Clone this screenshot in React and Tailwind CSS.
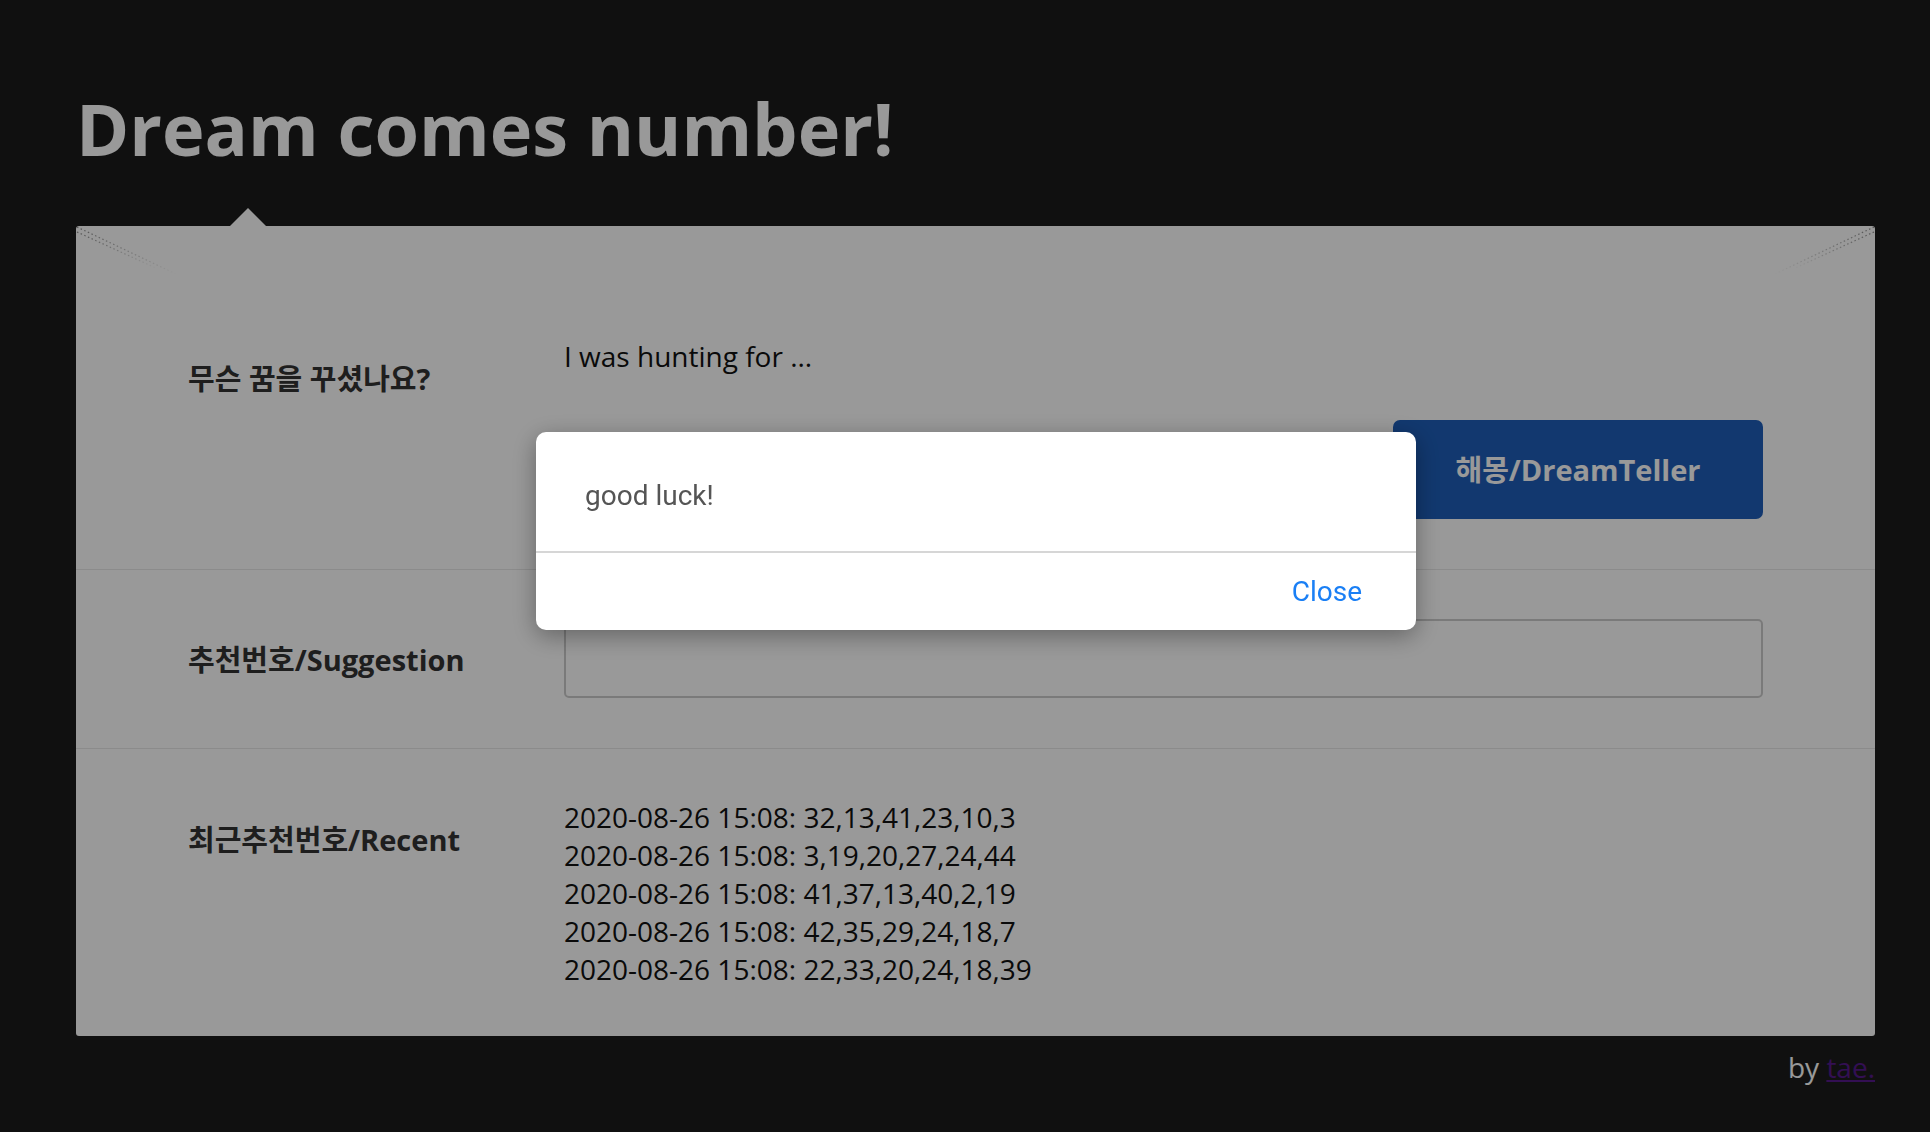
import React from 'react';

const RECENT = [
  '2020-08-26 15:08: 32,13,41,23,10,3',
  '2020-08-26 15:08: 3,19,20,27,24,44',
  '2020-08-26 15:08: 41,37,13,40,2,19',
  '2020-08-26 15:08: 42,35,29,24,18,7',
  '2020-08-26 15:08: 22,33,20,24,18,39',
];

// paper-fold dotted lines in the card corners
function CornerFold({ flip }) {
  return (
    <svg
      width="110"
      height="55"
      viewBox="0 0 110 55"
      className={`absolute top-0 ${flip ? 'right-0 -scale-x-100' : 'left-0'}`}
    >
      <defs>
        <linearGradient id={flip ? 'fadeR' : 'fadeL'} x1="0" y1="0" x2="1" y2="0">
          <stop offset="0" stopColor="#8a8a8a" stopOpacity="1" />
          <stop offset="1" stopColor="#8a8a8a" stopOpacity="0" />
        </linearGradient>
      </defs>
      <line x1="1" y1="1" x2="100" y2="48" stroke={`url(#${flip ? 'fadeR' : 'fadeL'})`} strokeWidth="1.2" strokeDasharray="1.5 2.5" />
      <line x1="1" y1="6" x2="82" y2="43" stroke={`url(#${flip ? 'fadeR' : 'fadeL'})`} strokeWidth="1.2" strokeDasharray="1.5 2.5" />
    </svg>
  );
}

export default function App() {
  return (
    <div className="min-h-screen bg-[#1c1c1c] font-['Open_Sans','Noto_Sans_CJK_KR',sans-serif] pl-[76px] pt-[92px] pb-[40px]">
      <h1 className="text-[72px] leading-none font-bold text-white">Dream comes number!</h1>

      {/* --- CARD --- */}
      <div className="relative mt-[62px] w-[1799px] bg-white rounded-[3px]">
        <div className="absolute -top-[18px] left-[154px] w-0 h-0 border-l-[18px] border-r-[18px] border-b-[18px] border-l-transparent border-r-transparent border-b-white"></div>
        <CornerFold />
        <CornerFold flip />

        {/* dream */}
        <div className="flex items-start px-[112px] pb-[50px] border-b border-[#e8e8e8]">
          <div className="w-[376px] shrink-0 pt-[134px] text-[29px] leading-[38px] font-bold text-[#333]">
            무슨 꿈을 꾸셨나요?
          </div>
          <div className="flex-1 pt-[111px]">
            <div className="text-[28px] leading-[38px] text-[#111]">I was hunting for ...</div>
            <div className="flex justify-end mt-[45px]">
              <button className="w-[370px] h-[99px] rounded-[7px] bg-[#1e5eb9] text-white font-bold text-[29px]">
                해몽/DreamTeller
              </button>
            </div>
          </div>
        </div>

        {/* suggestion */}
        <div className="flex items-center px-[112px] pt-[49px] pb-[50px] border-b border-[#e8e8e8]">
          <div className="w-[376px] shrink-0 pt-[3px] text-[29px] leading-[38px] font-bold text-[#333]">
            추천번호/Suggestion
          </div>
          <div className="flex-1 h-[79px] border-2 border-[#ccc] rounded-[5px]"></div>
        </div>

        {/* recent */}
        <div className="flex items-start px-[112px] pt-[49px] pb-[48px]">
          <div className="w-[376px] shrink-0 pt-[23px] text-[29px] leading-[38px] font-bold text-[#333]">
            최근추천번호/Recent
          </div>
          <div className="flex-1 flex flex-col text-[28px] leading-[38px] text-[#111]">
            {RECENT.map((r) => (
              <div key={r}>{r}</div>
            ))}
          </div>
        </div>
      </div>

      <div className="w-[1799px] mt-[12px] text-right text-[28px] leading-[38px] text-white">
        by <a href="#" className="text-[#551a8b] underline">tae.</a>
      </div>

      {/* --- MODAL --- */}
      <div className="fixed inset-0 bg-black/40">
        <div className="absolute left-[536px] top-[432px] w-[880px] bg-white rounded-[10px] shadow-[0_6px_24px_rgba(0,0,0,0.35)] font-['Roboto','Liberation_Sans',sans-serif]">
          <div className="pl-[49px] pt-[47px] pb-[38px] text-[28px] leading-[34px] text-[#555]">good luck!</div>
          <div className="border-t-2 border-[#d6d6d6] h-[79px] flex items-center justify-end pr-[54px]">
            <button className="text-[28px] leading-[34px] text-[#1a7ff5]">Close</button>
          </div>
        </div>
      </div>
    </div>
  );
}
